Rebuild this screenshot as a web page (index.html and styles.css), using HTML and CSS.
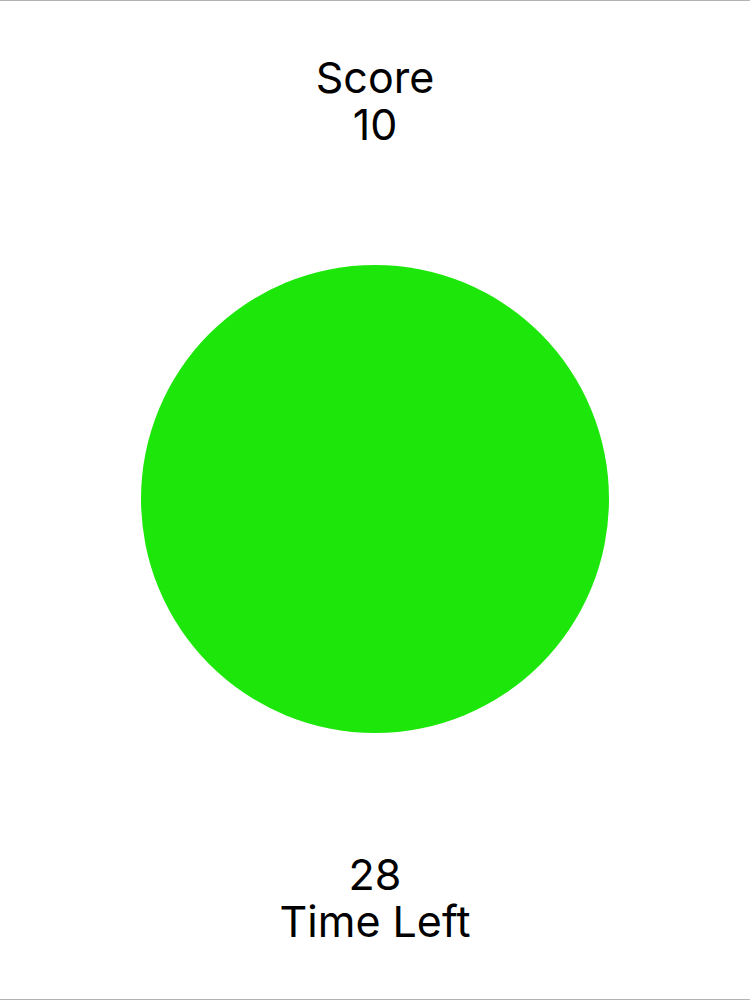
FILE: index.html
```html
<!DOCTYPE html>
<html>
<head>
<meta charset="utf-8">
<link rel="stylesheet" href="styles.css">
</head>
<body>
<div class="page">
  <div class="score">
    <div class="label">Score</div>
    <div class="value">10</div>
  </div>
  <div class="target"></div>
  <div class="timer">
    <div class="value">28</div>
    <div class="label">Time Left</div>
  </div>
</div>
</body>
</html>
```
FILE: styles.css
```css
html, body {
  margin: 0;
  padding: 0;
  background: #ffffff;
}
.page {
  width: 750px;
  height: 1000px;
  box-sizing: border-box;
  border-top: 1px solid #b3b3b3;
  border-bottom: 1px solid #b3b3b3;
  display: flex;
  flex-direction: column;
  align-items: center;
  font-family: Inter, "Liberation Sans", sans-serif;
  color: #000000;
  font-size: 43px;
  line-height: 47px;
  text-align: center;
}
.score {
  margin-top: 53px;
}
.target {
  margin-top: 117px;
  width: 468px;
  height: 468px;
  border-radius: 50%;
  background: #1de70a;
  flex-shrink: 0;
}
.timer {
  margin-top: 118px;
}
```
